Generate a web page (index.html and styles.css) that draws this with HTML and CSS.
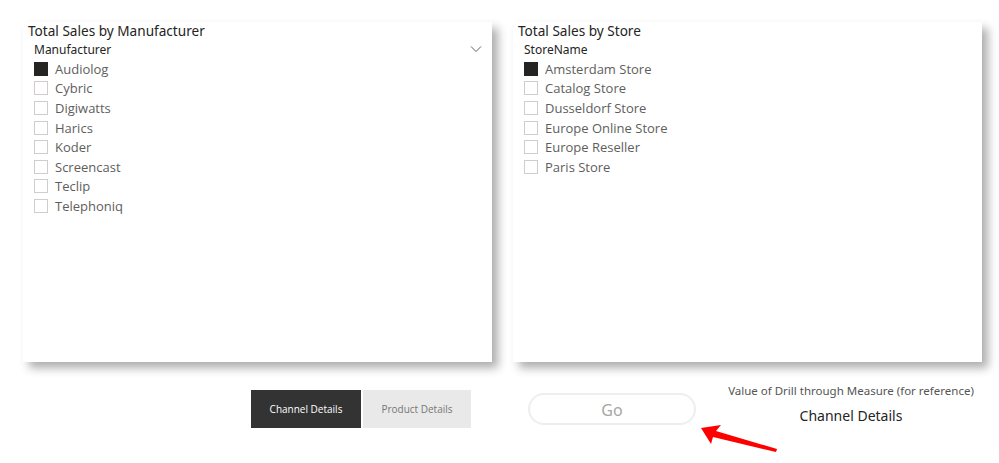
FILE: index.html
```html
<!DOCTYPE html>
<html lang="en">
<head>
    <meta charset="UTF-8">
    <title>Drill through</title>
    <link rel="stylesheet" href="styles.css">
</head>
<body>

    <div class="panels">
        <div class="panel">
            <div class="panel-title">Total Sales by Manufacturer</div>
            <div class="slicer-head">
                <span>Manufacturer</span>
                <svg class="chevron" width="12" height="8" viewBox="0 0 12 8"><path d="M1 1.5 L6 6.5 L11 1.5" fill="none" stroke="#605e5c" stroke-width="1"/></svg>
            </div>
            <ul class="items">
                <li class="checked"><span class="box"></span>Audiolog</li>
                <li><span class="box"></span>Cybric</li>
                <li><span class="box"></span>Digiwatts</li>
                <li><span class="box"></span>Harics</li>
                <li><span class="box"></span>Koder</li>
                <li><span class="box"></span>Screencast</li>
                <li><span class="box"></span>Teclip</li>
                <li><span class="box"></span>Telephoniq</li>
            </ul>
        </div>

        <div class="panel">
            <div class="panel-title">Total Sales by Store</div>
            <div class="slicer-head">
                <span>StoreName</span>
            </div>
            <ul class="items">
                <li class="checked"><span class="box"></span>Amsterdam Store</li>
                <li><span class="box"></span>Catalog Store</li>
                <li><span class="box"></span>Dusseldorf Store</li>
                <li><span class="box"></span>Europe Online Store</li>
                <li><span class="box"></span>Europe Reseller</li>
                <li><span class="box"></span>Paris Store</li>
            </ul>
        </div>
    </div>

    <div class="footer">
        <div class="tabs">
            <div class="tab active">Channel Details</div>
            <div class="tab">Product Details</div>
        </div>
        <div class="go">Go</div>
        <div class="measure">
            <div class="measure-label">Value of Drill through Measure (for reference)</div>
            <div class="measure-value">Channel Details</div>
        </div>
    </div>

    <!-- annotation arrow pointing at the Go button -->
    <svg class="arrow" width="90" height="36" viewBox="0 0 90 36">
        <polygon points="2,3 22,0 17,6 78,24 77,27 14,12 12,19" fill="#ff0000"/>
    </svg>

</body>
</html>
```

FILE: styles.css
```css
/* Page */
body {
    margin: 0;
    padding: 0;
    background-color: white;
    font-family: "Open Sans", "Noto Sans", sans-serif;
    color: #252423;
    position: relative;
    width: 999px;
    height: 463px;
    overflow: hidden;
}

/* Slicer panels */
.panels {
    display: flex;
    gap: 21px;
    padding: 22px 0 0 23px;
}

.panel {
    width: 469px;
    height: 340px;
    background: white;
    box-shadow: 6px 6px 9px rgba(0, 0, 0, 0.32);
    box-sizing: border-box;
    padding: 0 0 0 5px;
}

.panel-title {
    font-family: "Noto Sans", sans-serif;
    font-size: 13.6px;
    line-height: 18px;
    color: #252423;
}

.slicer-head {
    display: flex;
    justify-content: space-between;
    align-items: center;
    padding: 0 10px 0 6px;
    font-family: "Noto Sans", sans-serif;
    font-size: 12px;
    line-height: 17px;
    height: 17px;
    margin-top: 1px;
}

.chevron {
    margin-top: -2px;
}

.items {
    list-style: none;
    margin: 1px 0 0 6px;
    padding: 0;
}

.items li {
    display: flex;
    align-items: center;
    height: 19.6px;
    font-size: 13px;
    color: #605e5c;
}

.box {
    width: 12px;
    height: 12px;
    border: 1px solid #d0cecc;
    margin-right: 7px;
    flex-shrink: 0;
}

.checked .box {
    background: #252423;
    border-color: #252423;
}

/* Bottom row */
.footer {
    display: flex;
    align-items: flex-start;
    margin-top: 28px;
    padding-left: 251px;
}

.tabs {
    display: flex;
    gap: 2px;
}

.tab {
    width: 108px;
    height: 38px;
    background: #e9e9e9;
    color: #777;
    font-size: 10px;
    display: flex;
    align-items: center;
    justify-content: center;
}

.tab.active {
    width: 110px;
    background: #333333;
    color: white;
}

.go {
    margin: 3px 0 0 57px;
    width: 168px;
    height: 32px;
    box-sizing: border-box;
    border: 2px solid #eeeeee;
    border-radius: 16px;
    color: #a6a6a6;
    font-family: "Noto Sans", sans-serif;
    font-size: 16px;
    padding-top: 2px;
    display: flex;
    align-items: center;
    justify-content: center;
}

.measure {
    margin: -7px 0 0 31px;
    width: 248px;
    text-align: center;
    font-family: "Noto Sans", sans-serif;
}

.measure-label {
    font-size: 11.5px;
    line-height: 16px;
    color: #555;
}

.measure-value {
    font-size: 14px;
    line-height: 18px;
    margin-top: 8px;
    color: #252423;
}

/* Annotation */
.arrow {
    position: absolute;
    left: 699px;
    top: 425px;
}
```
